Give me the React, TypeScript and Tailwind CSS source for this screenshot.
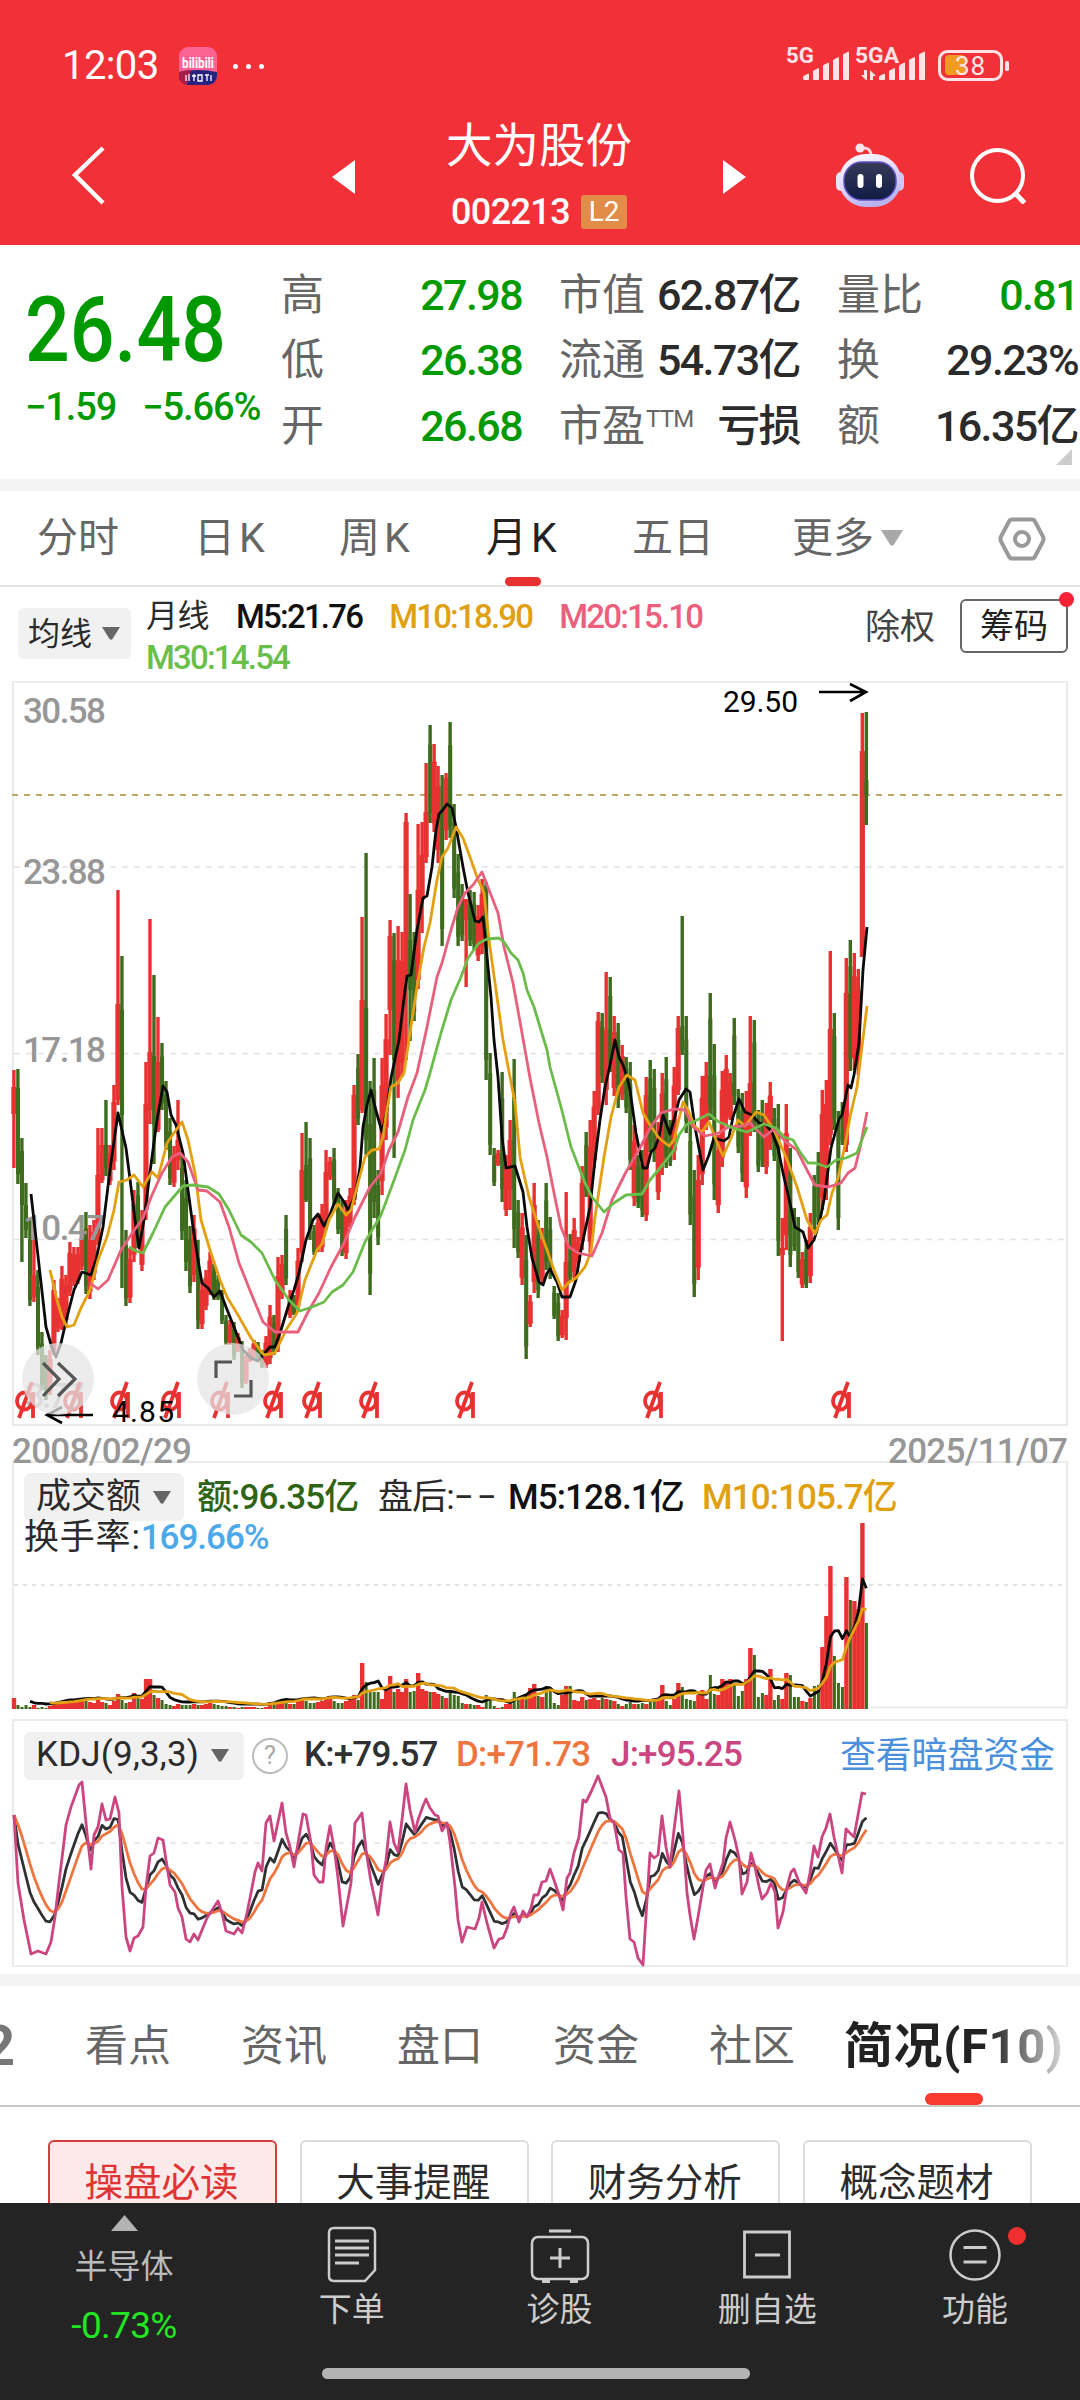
import { clsx } from "clsx"

type Candle = [string, number, number, number?, number?]

// [direction, high, low, body top, body bottom], one entry per month
const candles: Candle[] = [
    ["r", 1070, 1168, 1087, 1114], ["g", 1069, 1184, 1088, 1174], ["g", 1138, 1262, 1151, 1205], ["g", 1183, 1238, 1205, 1230],
    ["g", 1220, 1306, 1240, 1300], ["r", 1240, 1302, 1275, 1297], ["g", 1270, 1355], ["g", 1332, 1390], ["g", 1355, 1400],
    ["r", 1350, 1395], ["r", 1280, 1355, 1290, 1350], ["r", 1298, 1332], ["r", 1266, 1330], ["r", 1275, 1325],
    ["r", 1242, 1296], ["r", 1247, 1286], ["r", 1247, 1284], ["r", 1230, 1270], ["g", 1212, 1294], ["r", 1225, 1299],
    ["r", 1220, 1280], ["r", 1128, 1245, 1175, 1240], ["r", 1128, 1183, 1145, 1180], ["g", 1100, 1176, 1145, 1168],
    ["r", 1145, 1185], ["r", 1085, 1170], ["r", 890, 1105, 1004, 1100], ["g", 956, 1288, 1010, 1115], ["g", 1230, 1306],
    ["r", 1248, 1303], ["r", 1190, 1262], ["g", 1182, 1248], ["r", 1210, 1271], ["r", 1062, 1220, 1104, 1210],
    ["r", 919, 1124, 1052, 1110], ["g", 975, 1164, 1056, 1125], ["r", 1017, 1132, 1062, 1130], ["g", 1043, 1110],
    ["g", 1081, 1150], ["g", 1118, 1185], ["r", 1146, 1187], ["r", 1100, 1170, 1140, 1160], ["g", 1150, 1240],
    ["g", 1180, 1271], ["g", 1226, 1293], ["r", 1215, 1282], ["g", 1240, 1329], ["r", 1280, 1329], ["r", 1270, 1310],
    ["r", 1252, 1295], ["g", 1264, 1300], ["g", 1275, 1300], ["g", 1290, 1324], ["g", 1315, 1345], ["r", 1320, 1345],
    ["g", 1322, 1360], ["r", 1333, 1352], ["g", 1341, 1388], ["r", 1355, 1384], ["r", 1348, 1362], ["r", 1340, 1358],
    ["g", 1342, 1360], ["g", 1350, 1368], ["r", 1336, 1368], ["r", 1305, 1364], ["g", 1315, 1355], ["r", 1257, 1352],
    ["r", 1255, 1299], ["g", 1215, 1285], ["r", 1290, 1318], ["g", 1295, 1315], ["r", 1248, 1312],
    ["r", 1133, 1262, 1170, 1253], ["g", 1122, 1202, 1165, 1200], ["g", 1138, 1240], ["g", 1225, 1255], ["r", 1215, 1252],
    ["r", 1204, 1252], ["r", 1150, 1230, 1172, 1225], ["r", 1157, 1180], ["g", 1148, 1205], ["g", 1188, 1234],
    ["g", 1200, 1256], ["r", 1200, 1259], ["r", 1188, 1227], ["r", 1085, 1205, 1095, 1200], ["g", 1054, 1125],
    ["r", 917, 1113, 1000, 1110], ["g", 853, 1155, 1008, 1140], ["g", 1081, 1295], ["g", 1058, 1218], ["g", 1170, 1245],
    ["r", 1058, 1195], ["r", 1014, 1140], ["r", 920, 1055, 936, 1010], ["g", 933, 1158, 960, 1060], ["r", 926, 1098],
    ["r", 932, 1077], ["r", 813, 1060, 822, 980], ["g", 894, 1041, 940, 990], ["g", 932, 1021], ["r", 824, 989, 890, 980],
    ["r", 822, 933, 855, 900], ["r", 763, 863, 812, 857], ["g", 725, 823], ["r", 744, 832], ["r", 766, 863, 786, 850],
    ["g", 775, 946], ["r", 773, 840, 778, 830], ["g", 722, 838], ["g", 804, 898], ["g", 854, 946], ["g", 884, 941],
    ["r", 899, 987, 899, 920], ["g", 890, 946], ["g", 892, 950], ["r", 905, 961], ["r", 879, 954], ["g", 882, 1080, 886, 1060],
    ["g", 1053, 1155], ["g", 1148, 1186], ["r", 1150, 1166], ["g", 1072, 1202], ["r", 1155, 1216], ["r", 1120, 1210, 1140, 1190],
    ["g", 1059, 1248], ["g", 1200, 1258], ["r", 1213, 1285], ["g", 1235, 1359], ["r", 1295, 1327], ["r", 1183, 1293],
    ["g", 1220, 1298], ["r", 1228, 1285], ["g", 1183, 1270], ["g", 1217, 1279], ["g", 1286, 1319], ["g", 1293, 1341],
    ["r", 1310, 1338], ["r", 1192, 1340, 1262, 1318], ["g", 1234, 1282], ["r", 1218, 1278], ["r", 1237, 1265],
    ["r", 1166, 1250], ["g", 1132, 1197], ["r", 1120, 1255], ["r", 1091, 1168], ["r", 1012, 1115, 1021, 1110],
    ["g", 1013, 1083], ["r", 972, 1105, 1030, 1090], ["g", 977, 1072], ["r", 1016, 1096], ["g", 1023, 1108],
    ["r", 1045, 1100], ["g", 1057, 1113], ["g", 1062, 1170], ["r", 1125, 1206], ["g", 1155, 1208], ["g", 1150, 1217],
    ["r", 1077, 1221, 1095, 1215], ["g", 1060, 1152], ["g", 1069, 1162], ["r", 1122, 1200], ["r", 1073, 1175],
    ["g", 1057, 1168], ["g", 1120, 1166], ["r", 1067, 1160], ["r", 1016, 1095, 1028, 1090], ["g", 916, 1055, 1026, 1050],
    ["g", 1016, 1133], ["g", 1120, 1225], ["g", 1170, 1297], ["r", 1155, 1280], ["r", 1076, 1185], ["r", 1062, 1130],
    ["g", 993, 1120], ["g", 1044, 1200], ["r", 1135, 1213], ["r", 1071, 1167], ["r", 1055, 1125], ["r", 1073, 1120],
    ["g", 1018, 1105], ["g", 1089, 1153], ["g", 1093, 1182], ["r", 1091, 1198], ["r", 1016, 1136, 1083, 1130],
    ["g", 1020, 1132], ["g", 1110, 1172], ["g", 1100, 1167], ["r", 1103, 1174], ["r", 1082, 1150], ["g", 1108, 1161],
    ["g", 1104, 1256], ["r", 1218, 1341, 1248, 1255], ["r", 1104, 1250], ["g", 1148, 1267], ["g", 1208, 1251],
    ["g", 1217, 1278], ["r", 1252, 1288], ["g", 1240, 1288], ["r", 1213, 1283], ["g", 1175, 1230], ["g", 1152, 1225],
    ["r", 1090, 1210], ["r", 1080, 1200], ["r", 951, 1145, 1029, 1135], ["g", 1013, 1130], ["g", 1111, 1230],
    ["g", 1102, 1145], ["r", 958, 1152, 993, 1145], ["g", 940, 1071], ["r", 953, 1070], ["r", 969, 1075],
    ["r", 713, 957, 751, 957], ["g", 712, 825, 780, 795],
]

const volumes = [
    11, 4, 2, 4, 2, 4, 1, 2, 1, 3, 6, 5, 7, 6, 6, 7, 7, 9, 8, 7, 6, 10, 7, 6, 4, 8, 15, 9, 6, 7, 16, 11, 10, 30, 30, 14, 11,
    9, 5, 4, 3, 5, 4, 4, 4, 5, 4, 4, 5, 6, 5, 4, 3, 3, 2, 2, 1, 2, 2, 2, 2, 1, 1, 2, 7, 5, 8, 7, 6, 5, 5, 9, 11, 8, 6, 6, 7,
    8, 12, 11, 8, 6, 6, 8, 9, 14, 9, 46, 27, 18, 17, 17, 10, 18, 33, 17, 20, 17, 30, 17, 18, 36, 20, 18, 17, 17, 15, 13, 11,
    17, 14, 13, 6, 5, 5, 4, 4, 2, 14, 12, 3, 1, 2, 5, 5, 17, 11, 10, 13, 21, 25, 13, 12, 22, 18, 6, 4, 14, 23, 23, 9, 8, 12,
    9, 10, 11, 9, 11, 10, 9, 8, 5, 3, 5, 7, 5, 5, 6, 5, 7, 9, 9, 24, 8, 4, 10, 26, 22, 10, 9, 8, 14, 19, 10, 34, 15, 14, 30,
    28, 30, 24, 13, 18, 30, 61, 54, 12, 16, 14, 40, 9, 14, 10, 36, 34, 12, 12, 8, 7, 11, 23, 24, 62, 93, 143, 53, 26, 22,
    132, 109, 108, 100, 186, 86,
]

const m5Points =
    "31,1194 46,1327 52,1348 56,1357 61,1343 67,1317 74,1290 82,1272 91,1275 96,1260 103,1227 110,1170 118,1113 126,1148 131,1187 135,1220 139,1248 144,1220 150,1172 157,1120 163,1086 167,1092 171,1115 176,1125 183,1153 188,1190 193,1227 198,1260 202,1283 208,1288 214,1297 220,1291 226,1307 234,1327 243,1350 251,1358 258,1361 263,1355 270,1347 275,1347 281,1330 288,1307 294,1290 299,1273 306,1240 313,1220 318,1214 324,1226 329,1217 338,1193 344,1202 348,1210 355,1197 360,1167 363,1127 367,1105 371,1090 375,1107 382,1132 387,1110 391,1078 399,1040 405,990 407,976 411,975 417,930 423,898 427,896 432,867 436,830 439,814 442,811 447,804 452,808 456,827 463,867 468,893 475,921 479,922 483,917 486,947 491,997 494,1040 498,1077 502,1137 506,1168 515,1166 523,1192 527,1227 532,1258 539,1282 543,1285 547,1273 550,1269 557,1282 562,1297 570,1297 576,1280 581,1250 590,1207 595,1160 600,1120 605,1087 609,1070 615,1040 619,1057 623,1065 627,1077 630,1090 636,1133 643,1168 647,1168 651,1152 655,1148 659,1137 663,1115 670,1134 674,1120 679,1100 686,1089 690,1092 695,1127 703,1170 709,1155 714,1138 724,1141 729,1137 733,1117 739,1099 745,1112 752,1115 759,1123 766,1125 772,1132 778,1148 783,1173 790,1203 795,1227 803,1232 808,1248 814,1240 820,1220 824,1200 831,1148 839,1119 842,1115 848,1085 851,1088 854,1075 859,1043 863,970 867,927"
const m10Points =
    "50,1270 57,1300 62,1317 67,1327 74,1325 81,1308 90,1290 98,1260 107,1237 114,1210 119,1182 127,1180 134,1175 143,1187 152,1172 158,1178 167,1143 174,1133 182,1122 188,1140 195,1173 201,1220 210,1250 220,1280 227,1297 238,1315 251,1338 264,1355 275,1353 286,1330 297,1313 305,1280 317,1250 322,1244 329,1220 338,1204 346,1215 351,1210 358,1183 365,1157 372,1150 379,1149 383,1137 386,1115 391,1087 398,1083 404,1073 410,1033 417,987 424,947 430,923 437,880 442,857 448,848 456,827 463,838 470,857 477,877 484,893 489,940 496,990 503,1040 510,1077 515,1103 520,1157 529,1197 539,1228 547,1250 554,1270 562,1290 568,1283 576,1278 585,1267 591,1252 595,1217 604,1157 611,1117 619,1087 627,1075 635,1080 643,1113 650,1125 659,1138 669,1146 674,1140 683,1102 688,1110 695,1127 702,1132 709,1122 716,1140 723,1156 729,1143 738,1120 745,1126 756,1112 764,1115 774,1130 786,1157 797,1187 807,1220 815,1234 821,1220 827,1215 832,1193 838,1178 845,1145 850,1117 857,1087 860,1063 867,1006"
const m20Points =
    "90,1283 98,1289 108,1280 121,1250 133,1232 143,1218 152,1195 162,1173 172,1157 180,1153 188,1162 198,1190 207,1191 220,1202 229,1227 239,1263 251,1293 263,1322 275,1332 298,1332 308,1312 319,1293 331,1267 344,1243 355,1217 370,1187 381,1173 389,1150 398,1132 408,1097 417,1073 427,1027 437,977 442,963 451,930 458,907 465,893 473,885 482,872 489,890 498,913 504,947 513,983 522,1033 530,1078 539,1123 547,1157 554,1193 561,1227 569,1247 578,1253 592,1256 602,1233 612,1200 626,1172 640,1148 650,1128 661,1113 674,1109 685,1110 693,1127 705,1136 719,1133 728,1127 743,1126 750,1123 764,1137 774,1129 786,1142 797,1150 807,1170 815,1185 828,1187 841,1183 848,1173 855,1168 860,1148 867,1112"
const m30Points =
    "129,1247 136,1251 143,1253 153,1233 165,1207 183,1186 193,1185 208,1187 219,1194 229,1210 241,1235 251,1242 262,1253 275,1280 289,1300 300,1311 312,1307 324,1302 332,1292 343,1285 353,1272 365,1242 381,1215 393,1183 405,1150 413,1120 425,1090 430,1073 441,1033 451,1000 461,977 468,958 479,943 487,939 499,938 504,942 511,953 518,960 523,973 527,990 534,1007 540,1027 547,1050 550,1067 561,1107 571,1147 585,1183 592,1197 604,1212 614,1203 626,1195 642,1194 650,1180 664,1163 674,1150 679,1135 686,1125 697,1120 709,1114 719,1122 733,1128 747,1132 764,1124 776,1128 784,1137 793,1140 800,1152 808,1163 815,1163 827,1167 836,1160 846,1158 857,1153 861,1142 867,1127"

const jPoints =
    "14,1815 18,1883 24,1920 31,1954 38,1951 46,1954 51,1942 55,1917 59,1882 63,1850 66,1825 71,1807 79,1785 82,1782 87,1833 91,1869 94,1835 98,1827 102,1804 106,1820 110,1819 115,1797 119,1813 122,1887 126,1937 130,1951 134,1938 138,1936 143,1927 146,1887 150,1856 154,1853 158,1838 163,1840 166,1860 170,1885 175,1892 178,1908 182,1917 186,1939 190,1942 194,1934 198,1940 202,1930 207,1918 218,1901 222,1913 226,1931 234,1934 238,1928 242,1933 247,1913 251,1893 255,1872 258,1863 262,1871 266,1823 270,1816 274,1841 282,1803 286,1833 290,1847 294,1867 299,1837 303,1814 306,1815 311,1843 314,1875 319,1882 323,1882 326,1848 330,1826 334,1847 338,1878 343,1926 351,1883 355,1823 362,1813 366,1850 371,1882 375,1900 378,1915 382,1883 386,1860 390,1822 394,1843 398,1852 402,1820 406,1784 410,1810 415,1832 418,1820 423,1806 426,1799 430,1808 435,1815 438,1816 442,1831 447,1823 450,1842 455,1887 458,1920 462,1942 467,1927 475,1929 479,1918 482,1902 487,1923 494,1948 499,1939 503,1938 507,1928 511,1913 514,1907 519,1922 523,1911 527,1917 531,1908 534,1895 538,1895 542,1882 546,1881 550,1869 554,1880 559,1895 563,1910 567,1878 570,1873 574,1853 579,1837 583,1800 586,1802 591,1792 598,1776 606,1797 610,1818 614,1823 619,1850 623,1853 626,1897 630,1939 634,1942 638,1958 643,1965 647,1900 650,1853 654,1858 658,1855 662,1816 666,1847 670,1867 674,1830 679,1791 683,1837 687,1893 690,1915 694,1939 698,1917 703,1887 706,1870 710,1864 715,1888 718,1878 723,1863 726,1838 730,1822 735,1840 739,1858 742,1894 747,1882 751,1853 755,1867 759,1887 762,1899 767,1893 771,1883 775,1892 778,1928 783,1912 787,1887 791,1872 794,1869 799,1882 806,1893 810,1873 814,1846 818,1857 822,1837 826,1828 830,1814 834,1837 842,1873 846,1829 854,1837 858,1815 862,1793 866,1794"

const exRights = [26, 74, 121, 172, 221, 274, 313, 370, 466, 654, 842]

const RED = "#e83232"
const GREEN = "#3f6b1e"

const xAt = (i: number) => 14 + i * 4.002

// K and D follow from J: J = 3K - 2D and D = (2D' + K) / 3
const kdLines = () => {
    const js = jPoints.split(" ").map((p) => p.split(",").map(Number))
    const k: string[] = []
    const d: string[] = []
    let prev = js[0][1]
    let seg = 0
    for (let i = 0; i < candles.length; i++) {
        const x = xAt(i)
        while (seg < js.length - 2 && js[seg + 1][0] < x) seg++
        const [x0, y0] = js[seg]
        const [x1, y1] = js[seg + 1]
        const t = Math.min(1, Math.max(0, (x - x0) / (x1 - x0)))
        const j = y0 + (y1 - y0) * t
        const dv = (6 * prev + j) / 7
        k.push(`${x},${(j + 2 * dv) / 3}`)
        d.push(`${x},${dv}`)
        prev = dv
    }
    return { k: k.join(" "), d: d.join(" ") }
}

const volumeAverage = (n: number) =>
    volumes
        .map((_, i) => {
            if (i < n - 1) return ""
            const sum = volumes.slice(i - n + 1, i + 1).reduce((a, b) => a + b, 0)
            return `${xAt(i)},${1706 - sum / n}`
        })
        .filter(Boolean)
        .join(" ")

const Line = ({ points, color }: { points: string; color: string }) => (
    <polyline points={points} fill="none" stroke={color} strokeWidth="2.8" strokeLinejoin="round" />
)

const Down = ({ className }: { className: string }) => (
    <svg viewBox="0 0 18 13" className={className}>
        <path d="M0 0h18L10.500 12q-1.500 1.500-3 0z" fill="currentColor" />
    </svg>
)

const StatusBar = () => (
    <div className="flex h-[100px] items-start justify-between pt-[40px] pr-[66px] pl-[62px] text-white">
        <div className="mt-[6px] flex h-10 items-center">
            <span className="w-[117px] text-[40px] leading-10 tracking-[-0.6px]">12:03</span>
            <svg viewBox="0 0 38 38" className="size-[38px]">
                <defs>
                    <clipPath id="app"><rect width="38" height="38" rx="9" /></clipPath>
                </defs>
                <g clipPath="url(#app)">
                    <rect width="38" height="38" fill="#fb6394" />
                    <path d="M0 25q19-4 38 0v13H0z" fill="#27227e" />
                    <path d="M0 25q7-2 12-2L8 38H0z" fill="#a81c4b" />
                    <text x="3" y="21" fontSize="15" fontWeight="700" fill="#fff" textLength="32" lengthAdjust="spacingAndGlyphs">bilibili</text>
                    <path d="M7 28v6M10 27v7M13 29h4M15 27v7M19 28h4v6h-4zM26 28h4M28 28v6M32 28v6" stroke="#fff" strokeWidth="1.300" fill="none" />
                </g>
            </svg>
            <div className="ml-[16px] flex gap-[8px]">
                {[0, 1, 2].map((d) => <i key={d} className="size-[5px] rounded-full bg-white" />)}
            </div>
        </div>
        <svg viewBox="781 40 233 44" className="h-11 w-[233px]">
            <g fill="#ffe3e6">
                <text x="786" y="63" fontSize="22" fontWeight="700" textLength="28" lengthAdjust="spacingAndGlyphs">5G</text>
                <text x="855" y="63" fontSize="22" fontWeight="700" textLength="44" lengthAdjust="spacingAndGlyphs">5GA</text>
                {[0, 1, 2, 3, 4].map((b) => (
                    <g key={b}>
                        <path d={`M${803.500 + b * 10} 79.500v${-3 - b * 5.500}l5-2.500v${5.500 + b * 5.500}z`} stroke="#ffe3e6" strokeLinejoin="round" />
                        <path d={`M${879.500 + b * 10} 79.500v${-3 - b * 5.500}l5-2.500v${5.500 + b * 5.500}z`} stroke="#ffe3e6" strokeLinejoin="round" />
                    </g>
                ))}
                <path d="M861 75h3v-5h3v10h-1zM870 70l6 6h-3v4h-3z" />
                <rect x="1005" y="61" width="4" height="10" rx="1.500" />
            </g>
            <rect x="939.500" y="51.500" width="62" height="28" rx="8" fill="none" stroke="#ffe3e6" strokeWidth="3" />
            <rect x="945" y="55" width="20" height="20" rx="4" fill="#f39a22" />
            <text x="955" y="75" fontSize="26" fill="#ffe9e9" textLength="30">38</text>
        </svg>
    </div>
)

const Robot = () => (
    <svg viewBox="0 0 70 66" className="h-[66px] w-[70px]">
        <defs>
            <linearGradient id="shell" x1="0" y1="0" x2="0.4" y2="1">
                <stop offset="0" stopColor="#fff" />
                <stop offset="0.5" stopColor="#e7dcfb" />
                <stop offset="1" stopColor="#b9b4f0" />
            </linearGradient>
            <linearGradient id="visor" x1="0" y1="0" x2="0" y2="1">
                <stop offset="0" stopColor="#363a57" />
                <stop offset="1" stopColor="#101c45" />
            </linearGradient>
        </defs>
        <path d="M27 6q9-1 9 8" fill="none" stroke="#f9d9e2" strokeWidth="3" />
        <circle cx="25" cy="6" r="4.500" fill="#fbe3ea" />
        <rect x="1" y="30" width="10" height="19" rx="5" fill="#e9e4fb" />
        <rect x="59" y="30" width="10" height="19" rx="5" fill="#cfc6f6" />
        <rect x="4" y="12" width="62" height="53" rx="27" fill="url(#shell)" />
        <rect x="9" y="20" width="52" height="38" rx="18" fill="url(#visor)" stroke="#5f4fc0" strokeWidth="1.500" />
        <rect x="22.500" y="32" width="6" height="14" rx="3" fill="#fff" />
        <rect x="41" y="32" width="6" height="14" rx="3" fill="#fff" />
    </svg>
)

const Header = () => (
    <header className="h-[245px] bg-[#f23037]">
        <StatusBar />
        <div className="flex h-[145px] text-white">
            <svg viewBox="0 0 320 145" className="w-[320px]">
                <path d="M103 48L75 75l28 28" fill="none" stroke="#fff" strokeWidth="4.500" />
            </svg>
            <div className="flex w-[438px] justify-between px-3">
                <svg viewBox="0 0 23 34" className="mt-[60px] h-[34px] w-[23px]"><path d="M23 0v34L0 17z" fill="#fff" /></svg>
                <div className="flex w-[200px] flex-col items-center">
                    <h1 className="mt-[18px] text-[46.500px] leading-[56px] whitespace-nowrap">大为股份</h1>
                    <div className="mt-[18px] flex items-center gap-[11px]">
                        <span className="text-[36px] leading-10 font-medium tracking-[-0.6px]">002213</span>
                        <span className="h-[34px] w-[46px] rounded-[3px] bg-[#e28c4a] text-center text-[28px] leading-[34px]">L2</span>
                    </div>
                </div>
                <svg viewBox="0 0 23 34" className="mt-[60px] h-[34px] w-[23px]"><path d="M0 0v34l23-17z" fill="#fff" /></svg>
            </div>
            <div className="mt-[42px] ml-[77px] flex items-start gap-[64px]">
                <Robot />
                <svg viewBox="0 0 60 62" className="h-[62px] w-[60px]">
                    <circle cx="28.500" cy="33.500" r="25.500" fill="none" stroke="#fff" strokeWidth="4" />
                    <path d="M46 51l9.500 10" stroke="#fff" strokeWidth="5" />
                </svg>
            </div>
        </div>
    </header>
)

const quotes = [
    { label: "高", value: "27.98", up: true },
    { label: "市值", value: "62.87亿" },
    { label: "量比", value: "0.81", up: true },
    { label: "低", value: "26.38", up: true },
    { label: "流通", value: "54.73亿" },
    { label: "换", value: "29.23%" },
    { label: "开", value: "26.68", up: true },
    { label: "市盈", sup: "TTM", value: "亏损" },
    { label: "额", value: "16.35亿" },
]

const Quote = () => (
    <section className="relative flex h-[234px]">
        <div className="w-[281px] pt-[44px] pl-[25px] text-[#009a00]">
            <div className="origin-left scale-x-[0.875] text-[90px] leading-[84px] font-medium">26.48</div>
            <div className="mt-[12px] flex gap-[26px] text-[38px] leading-[44px] font-medium tracking-[-1.100px] whitespace-nowrap">
                <span>−1.59</span>
                <span>−5.66%</span>
            </div>
        </div>
        <div className="grid h-[198px] w-[797px] grid-cols-[241px_241px_241px] gap-x-[37px] pt-[17px]">
            {quotes.map((q) => (
                <div key={q.label} className="flex h-[65.500px] items-center justify-between whitespace-nowrap">
                    <span className="flex text-[43px] leading-[60px] text-[#666]">
                        {q.label}
                        {q.sup && <span className="ml-px text-[24px] leading-[46px] tracking-[-0.8px]">{q.sup}</span>}
                    </span>
                    <span className={clsx("text-[43px] leading-[60px] font-medium tracking-[-1.600px]", q.up ? "text-[#009a00]" : "text-[#2b2b2b]")}>
                        {q.value}
                    </span>
                </div>
            ))}
        </div>
        <svg viewBox="0 0 16 16" className="absolute right-[8px] bottom-[14px] size-4"><path d="M16 0v16H0z" fill="#ccc" /></svg>
    </section>
)

const periods = [
    { name: "分时", className: "w-[157px]" },
    { name: "日K", className: "w-[145px] tracking-[4px]" },
    { name: "周K", className: "w-[147px] tracking-[4px]" },
    { name: "月K", className: "w-[146px] tracking-[4px] text-[#222]" },
    { name: "五日", className: "w-[160px]" },
]

const Periods = () => (
    <nav className="flex h-[96px] border-b-2 border-[#e4e4e4] pl-[37px] text-[41px] leading-[95px] text-[#666]">
        {periods.map((p) => (
            <div key={p.name} className={clsx("shrink-0", p.className)}>
                <div className="w-fit">
                    <div className="h-[86px]">{p.name}</div>
                    {p.name === "月K" && <div className="mx-auto h-[9px] w-9 rounded-full bg-[#e83030]" />}
                </div>
            </div>
        ))}
        <div className="flex w-[206px] items-center gap-[7px]">
            更多
            <Down className="w-[22px] text-[#a8a8a8]" />
        </div>
        <svg viewBox="0 0 48 44" className="mt-[26px] h-11 w-12">
            <path d="M14 2.500h20q2 0 3 2l8 15q1 2.500 0 5l-8 15q-1 2-3 2H14q-2 0-3-2l-8-15q-1-2.500 0-5l8-15q1-2 3-2z" fill="none" stroke="#999" strokeWidth="4" />
            <circle cx="24" cy="22" r="7" fill="none" stroke="#999" strokeWidth="4" />
        </svg>
    </nav>
)

const Averages = () => (
    <div className="flex h-[94px] pl-[18px]">
        <div className="mt-[21px] flex h-[51px] w-[113px] items-center justify-between rounded-md bg-[#f1f1f1] pr-[11px] pl-[10px] text-[32px] text-[#2b2b2b]">
            均线
            <Down className="w-[18px] text-[#666]" />
        </div>
        <div className="ml-[15px] w-[620px] pt-[9px] text-[33px] leading-[41px] font-medium tracking-[-1.800px]">
            <div className="flex h-[41px] gap-[27px] whitespace-nowrap">
                <span className="text-[32px] font-normal tracking-[-0.5px] text-[#2b2b2b]">月线</span>
                <span className="text-[#111]">M5:21.76</span>
                <span className="text-[#e0a010]">M10:18.90</span>
                <span className="text-[#ec5f7d]">M20:15.10</span>
            </div>
            <div className="text-[#6abf4b]">M30:14.54</div>
        </div>
        <div className="ml-[99px] w-[95px] pt-[20px] text-[35px] leading-[42px] text-[#444]">除权</div>
        <div className="relative mt-[12px] h-[54px] w-[108px] rounded-md border-2 border-[#666] text-center text-[34px] leading-[51px] text-[#222]">
            筹码
            <i className="absolute -top-[9px] -right-[8px] size-[15px] rounded-full bg-[#f82336]" />
        </div>
    </div>
)

const priceLabels = [
    { y: 723, text: "30.58" },
    { y: 884, text: "23.88" },
    { y: 1062, text: "17.18" },
    { y: 1240, text: "10.47" },
]

const PriceChart = () => (
    <svg viewBox="0 681 1080 746" className="block h-[746px] w-full font-medium">
        <g stroke="#e3e3e3" strokeWidth="1.500" strokeDasharray="6 6">
            <path d="M14 867H1067M14 1053.500H1067M14 1239.500H1067" />
        </g>
        <rect x="13" y="682" width="1054" height="743" fill="none" stroke="#ebebeb" strokeWidth="2" />
        <path d="M12 795H1066" stroke="#c0a76a" strokeWidth="2" strokeDasharray="6 6" />
        <g>
            {candles.map(([dir, hi, lo, top, bottom], i) => {
                const color = dir === "r" ? RED : GREEN
                const bodyTop = top ?? hi + (lo - hi) * 0.2
                const bodyBottom = bottom ?? lo - (lo - hi) * 0.1
                return (
                    <g key={i} fill={color}>
                        <rect x={xAt(i) - 1.800} y={hi} width="3.400" height={lo - hi} />
                        <rect x={xAt(i) - (dir === "r" ? 2.700 : 2)} y={bodyTop} width={dir === "r" ? 5.200 : 4} height={bodyBottom - bodyTop} />
                    </g>
                )
            })}
        </g>
        <g fill="#979797" fontSize="35">
            {priceLabels.map((l) => <text key={l.text} x="23" y={l.y} textLength="83">{l.text}</text>)}
            <text x="25" y="1408" textLength="60" opacity="0.6">3.77</text>
        </g>
        <Line points={m5Points} color="#0a0a0a" />
        <Line points={m10Points} color="#e3a012" />
        <Line points={m20Points} color="#e8607c" />
        <Line points={m30Points} color="#6cbc4c" />
        <g fill="none" stroke={RED} strokeWidth="3.800">
            {exRights.map((x) => (
                <path key={x} d={`M${x + 7} 1418v-26M${x + 6} 1401a7.500 8.500 0 1 0-15 0a7.500 8.500 0 1 0 15 0M${x - 7} 1418l13-36`} />
            ))}
        </g>
        <g fontSize="30" fontWeight="400">
            <text x="723" y="712" textLength="75">29.50</text>
            <text x="112" y="1422" textLength="62">4.85</text>
        </g>
        <g fill="none" stroke="#000" strokeWidth="2.600">
            <path d="M819 692H866M850 684l16 8-16 9" />
            <path d="M93 1415H47M62 1407l-15 8 15 8" />
        </g>
        <g fill="#e6e6e6" opacity="0.72">
            <circle cx="58" cy="1379" r="36" />
            <circle cx="233" cy="1379" r="36" />
        </g>
        <g fill="none" stroke="#555" strokeWidth="3.200">
            <path d="M43 1363l16 16-16 17M58 1363l17 16-17 17" />
            <path d="M216 1378v-16h16M251 1380v16h-17" />
        </g>
    </svg>
)

const Dates = () => (
    <div className="relative z-10 h-[34px] px-[12px]">
        <svg viewBox="12 1427 1056 46" className="block h-[46px] w-[1056px] font-medium" fill="#979797" fontSize="35">
            <text x="12" y="1463" textLength="180">2008/02/29</text>
            <text x="888" y="1463" textLength="180">2025/11/07</text>
        </svg>
    </div>
)

const VolumePanel = () => (
    <div className="grid h-[258px]">
        <svg viewBox="0 1461 1080 258" className="col-start-1 row-start-1 h-[258px] w-full">
            <path d="M14 1585H1067" stroke="#e3e3e3" strokeWidth="2" strokeDasharray="4 5" />
            <rect x="13" y="1462" width="1054" height="245.500" fill="none" stroke="#ebebeb" strokeWidth="2" />
            {volumes.map((v, i) => (
                <rect
                    key={i}
                    x={xAt(i) - (candles[i][0] === "r" ? 2.200 : 1.500)}
                    y={1709 - v}
                    width={candles[i][0] === "r" ? 4.400 : 3}
                    height={v}
                    fill={candles[i][0] === "r" ? RED : GREEN}
                />
            ))}
            <Line points={volumeAverage(5)} color="#0a0a0a" />
            <Line points={volumeAverage(10)} color="#e3a012" />
        </svg>
        <div className="z-10 col-start-1 row-start-1 pt-[12px] pl-[24px] text-[35px] font-medium whitespace-nowrap">
            <div className="flex h-12 items-center leading-[52px] tracking-[-0.9px]">
                <div className="flex h-12 w-[160px] items-center justify-between rounded-md bg-[#f1f1f1] pr-[13px] pl-[12px] font-normal tracking-normal text-[#2b2b2b]">
                    成交额
                    <Down className="w-[18px] text-[#666]" />
                </div>
                <span className="ml-[13px] w-[181px] pt-[2px] text-[#2f6416]">额:96.35亿</span>
                <span className="w-[130px] pt-[2px] font-normal text-[#2b2b2b]">盘后:<span className="tracking-[3px]">−−</span></span>
                <span className="w-[194px] pt-[2px] text-[#111]">M5:128.1亿</span>
                <span className="pt-[2px] text-[#e0a010]">M10:105.7亿</span>
            </div>
            <div className="pt-px leading-[32px] text-[#2b2b2b]">
                <span className="font-normal tracking-[0.8px]">换手率:</span>
                <span className="tracking-[-1px] text-[#4ba9e9]">169.66%</span>
            </div>
        </div>
    </div>
)

const KdjPanel = () => {
    const { k, d } = kdLines()
    return (
        <div className="grid h-[255px]">
            <svg viewBox="0 1719 1080 255" className="col-start-1 row-start-1 h-[255px] w-full">
                <path d="M14 1843H1067" stroke="#e3e3e3" strokeWidth="1.500" strokeDasharray="6 6" />
                <rect x="13" y="1720" width="1054" height="246" fill="none" stroke="#ebebeb" strokeWidth="2" />
                <Line points={k} color="#2f3133" />
                <Line points={d} color="#ee7540" />
                <Line points={jPoints} color="#cb4680" />
            </svg>
            <div className="z-10 col-start-1 row-start-1 flex h-[73px] items-center pl-[24px] text-[35px] font-medium tracking-[-0.8px] whitespace-nowrap">
                <div className="flex h-12 w-[220px] items-center justify-between rounded-md bg-[#f1f1f1] pr-[15px] pl-[12px] font-normal tracking-[0.2px] text-[#2b2b2b]">
                    KDJ(9,3,3)
                    <Down className="w-[18px] text-[#666]" />
                </div>
                <div className="ml-[8px] flex size-[36px] items-center justify-center rounded-full border-[2.500px] border-[#bbb] text-[26px] font-normal tracking-normal text-[#aaa]">?</div>
                <span className="ml-[16px] w-[152px] text-[#2f3133]">K:+79.57</span>
                <span className="w-[155px] text-[#ee7540]">D:+71.73</span>
                <span className="w-[229px] text-[#cb4680]">J:+95.25</span>
                <span className="text-[36px] font-normal tracking-[-0.2px] text-[#4a90dd]">查看暗盘资金</span>
            </div>
        </div>
    )
}

const Sections = () => (
    <nav className="flex h-[121px] overflow-hidden border-b-2 border-[#c8c8c8] text-[43px] leading-[121px] whitespace-nowrap text-[#666]">
        <div className="flex w-[85px] justify-start">
            <span className="-ml-[17px] text-[56px] font-bold text-[#777]">2</span>
        </div>
        {["看点", "资讯", "盘口", "资金", "社区"].map((name) => <div key={name} className="w-[156px] shrink-0">{name}</div>)}
        <div className="-ml-[21px]">
            <div className="h-[107px] bg-linear-to-r from-[#222] from-65% to-[#ddd] bg-clip-text text-[49px] font-bold tracking-[0.6px] text-transparent">
                简况(F10)
            </div>
            <div className="ml-[81px] h-[12px] w-[58px] rounded-full bg-[#f93a30]" />
        </div>
    </nav>
)

const Chips = () => (
    <div className="flex h-[96px] gap-[22.700px] overflow-hidden pt-[33px] pl-[48px]">
        {["操盘必读", "大事提醒", "财务分析", "概念题材"].map((name, i) => (
            <div
                key={name}
                className={clsx(
                    "h-[90px] w-[229px] shrink-0 rounded-md border-2 pr-[2px] text-center text-[38.500px] leading-[82px]",
                    i === 0 ? "border-[#d63c3c] bg-[#fce9e9] text-[#e03434]" : "border-[#dcdcdc] text-[#2b2b2b]"
                )}
            >
                {name}
            </div>
        ))}
    </div>
)

const NavIcon = ({ name }: { name: string }) => (
    <svg viewBox="0 0 60 58" className="h-[58px] w-[60px]" fill="none" stroke="#ccc" strokeWidth="2.500">
        {name === "下单" && (
            <>
                <path d="M12 2h36q5 0 5 5v37L43 55H12q-5 0-5-5V7q0-5 5-5z" />
                <path d="M13 15h34M13 22h34M13 29h34M13 37h24" strokeWidth="3" />
            </>
        )}
        {name === "诊股" && (
            <>
                <rect x="2" y="11" width="56" height="42" rx="6" />
                <path d="M19 5h22M30 22v20M20 32h20" strokeWidth="3" />
                <path d="M12 55h8M40 55h8" strokeWidth="4" />
            </>
        )}
        {name === "删自选" && <path d="M7.500 6h45v45h-45zM18 29h25" strokeWidth="2.800" />}
        {name === "功能" && (
            <>
                <circle cx="30" cy="29" r="24.500" />
                <path d="M18.500 21.500h23M18.500 36h23" strokeWidth="3" />
            </>
        )}
    </svg>
)

const BottomBar = () => (
    <footer className="h-[197px] bg-[#242424]">
        <div className="flex h-[165px] text-[33px] text-[#ccc]">
            <div className="flex w-[248px] flex-col items-center pt-[12px]">
                <svg viewBox="0 0 27 16" className="h-4 w-[27px]"><path d="M13.500 0L27 16H0z" fill="#b3b3b3" /></svg>
                <div className="mt-[11px] leading-[50px] text-[#bbb]">半导体</div>
                <div className="mt-[9px] text-[37px] leading-[50px] tracking-[-0.7px] text-[#22e622]">-0.73%</div>
            </div>
            {["下单", "诊股", "删自选", "功能"].map((name) => (
                <div key={name} className="relative flex w-[207.700px] flex-col items-center pt-[23px]">
                    <NavIcon name={name} />
                    <div className="leading-[52px]">{name}</div>
                    {name === "功能" && <i className="absolute top-[24px] left-[137px] size-[18px] rounded-full bg-[#f03030]" />}
                </div>
            ))}
        </div>
        <div className="ml-[322px] h-[11px] w-[428px] rounded-full bg-[#b3b3b3]" />
    </footer>
)

export default function App() {
    return (
        <main className="h-[2400px] w-[1080px] overflow-hidden bg-white font-[Roboto,'Noto_Sans_CJK_SC',sans-serif]">
            <Header />
            <Quote />
            <div className="h-3 bg-[#f4f4f4]" />
            <Periods />
            <Averages />
            <PriceChart />
            <Dates />
            <VolumePanel />
            <KdjPanel />
            <div className="h-3 bg-[#f4f4f4]" />
            <Sections />
            <Chips />
            <BottomBar />
        </main>
    )
}
